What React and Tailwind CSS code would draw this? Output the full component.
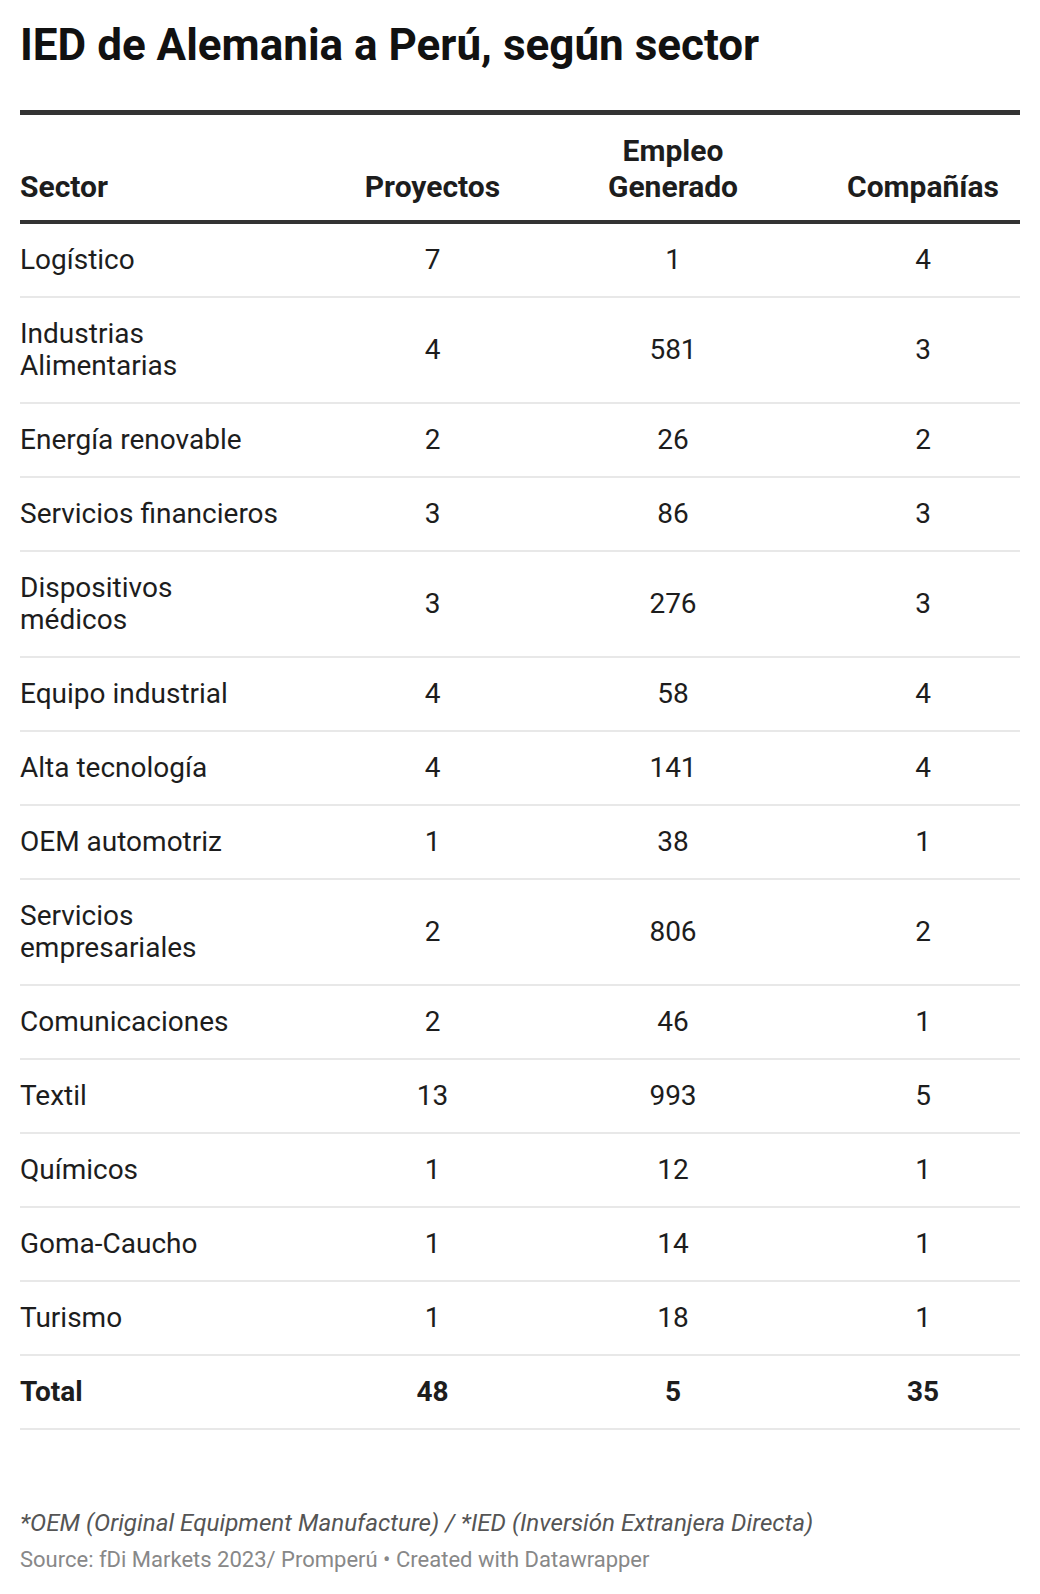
import React from 'react';

const rows = [
  { sector: ['Logístico'], proyectos: 7, empleo: 1, companias: 4 },
  { sector: ['Industrias', 'Alimentarias'], proyectos: 4, empleo: 581, companias: 3 },
  { sector: ['Energía renovable'], proyectos: 2, empleo: 26, companias: 2 },
  { sector: ['Servicios financieros'], proyectos: 3, empleo: 86, companias: 3 },
  { sector: ['Dispositivos', 'médicos'], proyectos: 3, empleo: 276, companias: 3 },
  { sector: ['Equipo industrial'], proyectos: 4, empleo: 58, companias: 4 },
  { sector: ['Alta tecnología'], proyectos: 4, empleo: 141, companias: 4 },
  { sector: ['OEM automotriz'], proyectos: 1, empleo: 38, companias: 1 },
  { sector: ['Servicios', 'empresariales'], proyectos: 2, empleo: 806, companias: 2 },
  { sector: ['Comunicaciones'], proyectos: 2, empleo: 46, companias: 1 },
  { sector: ['Textil'], proyectos: 13, empleo: 993, companias: 5 },
  { sector: ['Químicos'], proyectos: 1, empleo: 12, companias: 1 },
  { sector: ['Goma-Caucho'], proyectos: 1, empleo: 14, companias: 1 },
  { sector: ['Turismo'], proyectos: 1, empleo: 18, companias: 1 },
];

const gridCols = 'grid grid-cols-[325px_175px_306px_194px] items-center';

const Row = ({ row, bold }) => (
  <div className={`${gridCols} border-b-2 border-[#e8e8e8] py-5 leading-[32px] ${bold ? 'font-bold' : ''}`}>
    <div className="whitespace-nowrap">
      {row.sector.map((line, i) => (
        <div key={i}>{line}</div>
      ))}
    </div>
    <div className="text-center">{row.proyectos}</div>
    <div className="text-center">{row.empleo}</div>
    <div className="text-center">{row.companias}</div>
  </div>
);

export default function App() {
  return (
    <div
      className="w-[1040px] min-h-[1594px] bg-white px-5 pt-[19px] text-[#1d1d1d]"
      style={{ fontFamily: 'Roboto, "Noto Sans", sans-serif' }}
    >
      {/* Title */}
      <h1 className="text-[44px] leading-[52px] font-bold text-[#111]">
        IED de Alemania a Perú, según sector
      </h1>

      {/* Table */}
      <div className="mt-[39px] w-[1000px] border-t-[5px] border-[#333] text-[28px]">
        <div className={`${gridCols} items-end border-b-4 border-[#333] pt-[18px] pb-[15px] text-[30px] font-bold leading-[36px]`}>
          <div>Sector</div>
          <div className="text-center">Proyectos</div>
          <div className="text-center">
            Empleo
            <br />
            Generado
          </div>
          <div className="text-center">Compañías</div>
        </div>

        {rows.map((row, i) => (
          <Row key={i} row={row} />
        ))}

        <Row bold row={{ sector: ['Total'], proyectos: 48, empleo: 5, companias: 35 }} />
      </div>

      {/* Notes */}
      <div className="mt-[78px] text-[24.2px] leading-[30px] italic text-[#555]">
        *OEM (Original Equipment Manufacture) / *IED (Inversión Extranjera Directa)
      </div>
      <div className="mt-[8px] text-[22px] leading-[28px] text-[#888]">
        Source: fDi Markets 2023/ Promperú • Created with Datawrapper
      </div>
    </div>
  );
}
